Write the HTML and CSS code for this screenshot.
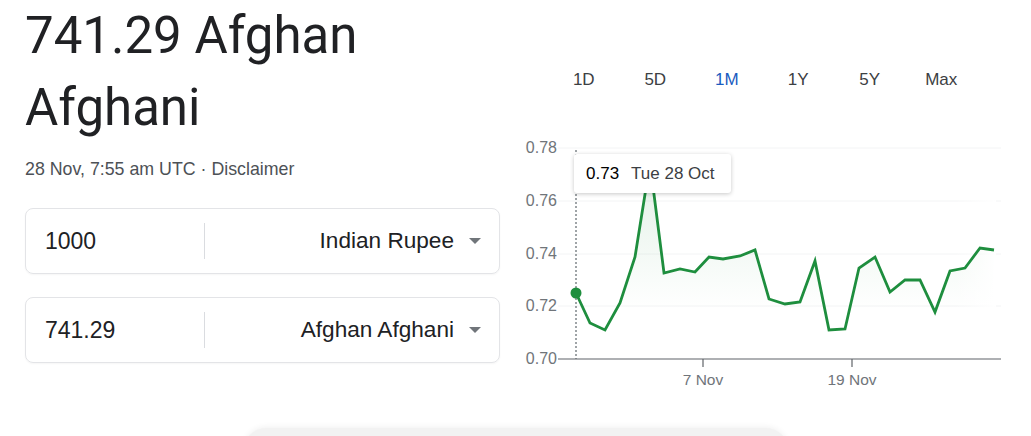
FILE: index.html
```html
<!DOCTYPE html>
<html lang="en">
    <head>
        <meta charset="UTF-8" />
        <meta name="viewport" content="width=device-width, initial-scale=1.0" />
        <title>741.29 Afghan Afghani</title>
        <link rel="stylesheet" href="styles.css">
    </head>
    <body>
        <div class="page">
            <div class="main-row">
                <section class="converter">
                    <h1 class="result">741.29 Afghan Afghani</h1>
                    <p class="timestamp">28 Nov, 7:55 am UTC · <span class="disclaimer">Disclaimer</span></p>

                    <div class="currency-box">
                        <span class="amount">1000</span>
                        <span class="divider"></span>
                        <span class="currency">Indian Rupee</span>
                        <span class="caret"></span>
                    </div>
                    <div class="currency-box">
                        <span class="amount">741.29</span>
                        <span class="divider"></span>
                        <span class="currency">Afghan Afghani</span>
                        <span class="caret"></span>
                    </div>
                </section>

                <section class="chart-panel">
                    <div class="tabs">
                        <span class="tab">1D</span>
                        <span class="tab">5D</span>
                        <span class="tab active">1M</span>
                        <span class="tab">1Y</span>
                        <span class="tab">5Y</span>
                        <span class="tab">Max</span>
                    </div>

                    <svg class="chart" width="511" height="270" viewBox="520 130 511 270">
                        <defs>
                            <linearGradient id="area-fill" x1="0" y1="0" x2="0" y2="1">
                                <stop offset="0" stop-color="#1e8e3e" stop-opacity="0.13" />
                                <stop offset="0.75" stop-color="#1e8e3e" stop-opacity="0" />
                            </linearGradient>
                            <linearGradient id="area-fade" x1="0" y1="0" x2="1" y2="0">
                                <stop offset="0.9" stop-color="#fff" stop-opacity="0" />
                                <stop offset="1" stop-color="#fff" stop-opacity="1" />
                            </linearGradient>
                        </defs>

                        <!-- grid -->
                        <g class="grid">
                            <line x1="558" y1="148" x2="1001" y2="148" />
                            <line x1="558" y1="201" x2="1001" y2="201" />
                            <line x1="558" y1="254" x2="1001" y2="254" />
                            <line x1="558" y1="306" x2="1001" y2="306" />
                        </g>

                        <g class="y-labels">
                            <text x="557" y="153">0.78</text>
                            <text x="557" y="206">0.76</text>
                            <text x="557" y="259">0.74</text>
                            <text x="557" y="311">0.72</text>
                            <text x="557" y="364">0.70</text>
                        </g>

                        <path class="area" d="M576 293 L590 323 L605 330 L620 303 L635 257 L650 163 L664 273 L680 269 L695 272 L709 257 L723 259 L740 256 L755 250 L769 299 L785 304 L800 302 L815 261 L829 330 L845 329 L859 268 L875 257 L890 292 L905 280 L920 280 L935 312 L950 271 L965 268 L980 248 L994 250 L994 359 L576 359 Z" />
                        <rect x="576" y="150" width="420" height="209" fill="url(#area-fade)" />

                        <line class="cursor" x1="576" y1="150" x2="576" y2="359" />

                        <polyline class="line" points="576,293 590,323 605,330 620,303 635,257 650,163 664,273 680,269 695,272 709,257 723,259 740,256 755,250 769,299 785,304 800,302 815,261 829,330 845,329 859,268 875,257 890,292 905,280 920,280 935,312 950,271 965,268 980,248 994,250" />
                        <circle class="dot" cx="576" cy="293" r="5.5" />

                        <line class="axis" x1="558" y1="359" x2="1001" y2="359" />
                        <line class="axis" x1="703" y1="359" x2="703" y2="367" />
                        <line class="axis" x1="852" y1="359" x2="852" y2="367" />
                        <g class="x-labels">
                            <text x="703" y="385">7 Nov</text>
                            <text x="852" y="385">19 Nov</text>
                        </g>
                    </svg>

                    <div class="tooltip">
                        <span class="tip-value">0.73</span>
                        <span class="tip-date">Tue 28 Oct</span>
                    </div>
                </section>
            </div>

            <div class="more-bar"></div>
        </div>
    </body>
</html>
```

FILE: styles.css
```css
body {
    margin: 0;
    padding: 0;
    background-color: #ffffff;
    font-family: "Liberation Sans", Arial, sans-serif;
    color: #202124;
    overflow: hidden;
}
.page {
    width: 1031px;
    height: 436px;
    overflow: hidden;
}
.main-row {
    display: flex;
    height: 400px;
}
.converter {
    width: 475px;
    padding-left: 25px;
}
.result {
    margin: 0;
    font-family: Roboto, "Liberation Sans", sans-serif;
    font-size: 51px;
    font-weight: 400;
    line-height: 72px;
    color: #202124;
}
.timestamp {
    margin: 13px 0 27px;
    font-size: 17.8px;
    line-height: 24px;
    color: #4d5156;
}
.currency-box {
    display: flex;
    align-items: center;
    height: 64px;
    margin-bottom: 23px;
    padding: 0 18px 0 19px;
    border: 1px solid #e3e4e7;
    border-radius: 8px;
    box-shadow: 0 1px 2px rgba(0, 0, 0, 0.04);
}
.amount {
    width: 159px;
    font-size: 23px;
    color: #202124;
}
.divider {
    width: 1px;
    height: 36px;
    background-color: #dadce0;
}
.currency {
    flex: 1;
    text-align: right;
    font-size: 22.6px;
    color: #202124;
}
.caret {
    width: 0;
    height: 0;
    margin-left: 15px;
    border-left: 6px solid transparent;
    border-right: 6px solid transparent;
    border-top: 6px solid #70757a;
}
.chart-panel {
    position: relative;
    width: 511px;
    margin-left: 20px;
}
.tabs {
    display: flex;
    margin: 64px 0 0 28px;
}
.tab {
    width: 71.5px;
    height: 32px;
    line-height: 32px;
    text-align: center;
    font-size: 17px;
    color: #3c4043;
}
.tab.active {
    color: #1a5bbf;
}
.chart {
    display: block;
    margin-top: 34px;
}
.grid line {
    stroke: #f3f4f5;
    stroke-width: 1;
}
.y-labels text {
    font-family: "Liberation Sans", Arial, sans-serif;
    font-size: 16px;
    fill: #70757a;
    text-anchor: end;
}
.x-labels text {
    font-family: "Liberation Sans", Arial, sans-serif;
    font-size: 15.5px;
    fill: #70757a;
    text-anchor: middle;
}
.area {
    fill: url(#area-fill);
}
.cursor {
    stroke: #80868b;
    stroke-width: 1.5;
    stroke-dasharray: 2 2;
}
.line {
    fill: none;
    stroke: #1e8e3e;
    stroke-width: 2.8;
    stroke-linejoin: miter;
}
.dot {
    fill: #1e8e3e;
}
.axis {
    stroke: #5f6368;
    stroke-width: 1.2;
}
.tooltip {
    position: absolute;
    left: 54px;
    top: 154px;
    width: 145px;
    height: 39px;
    padding-left: 12px;
    display: flex;
    align-items: center;
    gap: 12px;
    background-color: #ffffff;
    border-radius: 3px;
    box-shadow: 0 1px 4px rgba(0, 0, 0, 0.22);
    font-size: 17px;
}
.tip-value {
    color: #000000;
}
.tip-date {
    color: #3c4043;
}
.more-bar {
    width: 544px;
    height: 44px;
    margin: 28px auto 0;
    background-color: #f2f2f2;
    border-radius: 22px;
    box-shadow: 0 -1px 6px rgba(0, 0, 0, 0.06);
}
```
